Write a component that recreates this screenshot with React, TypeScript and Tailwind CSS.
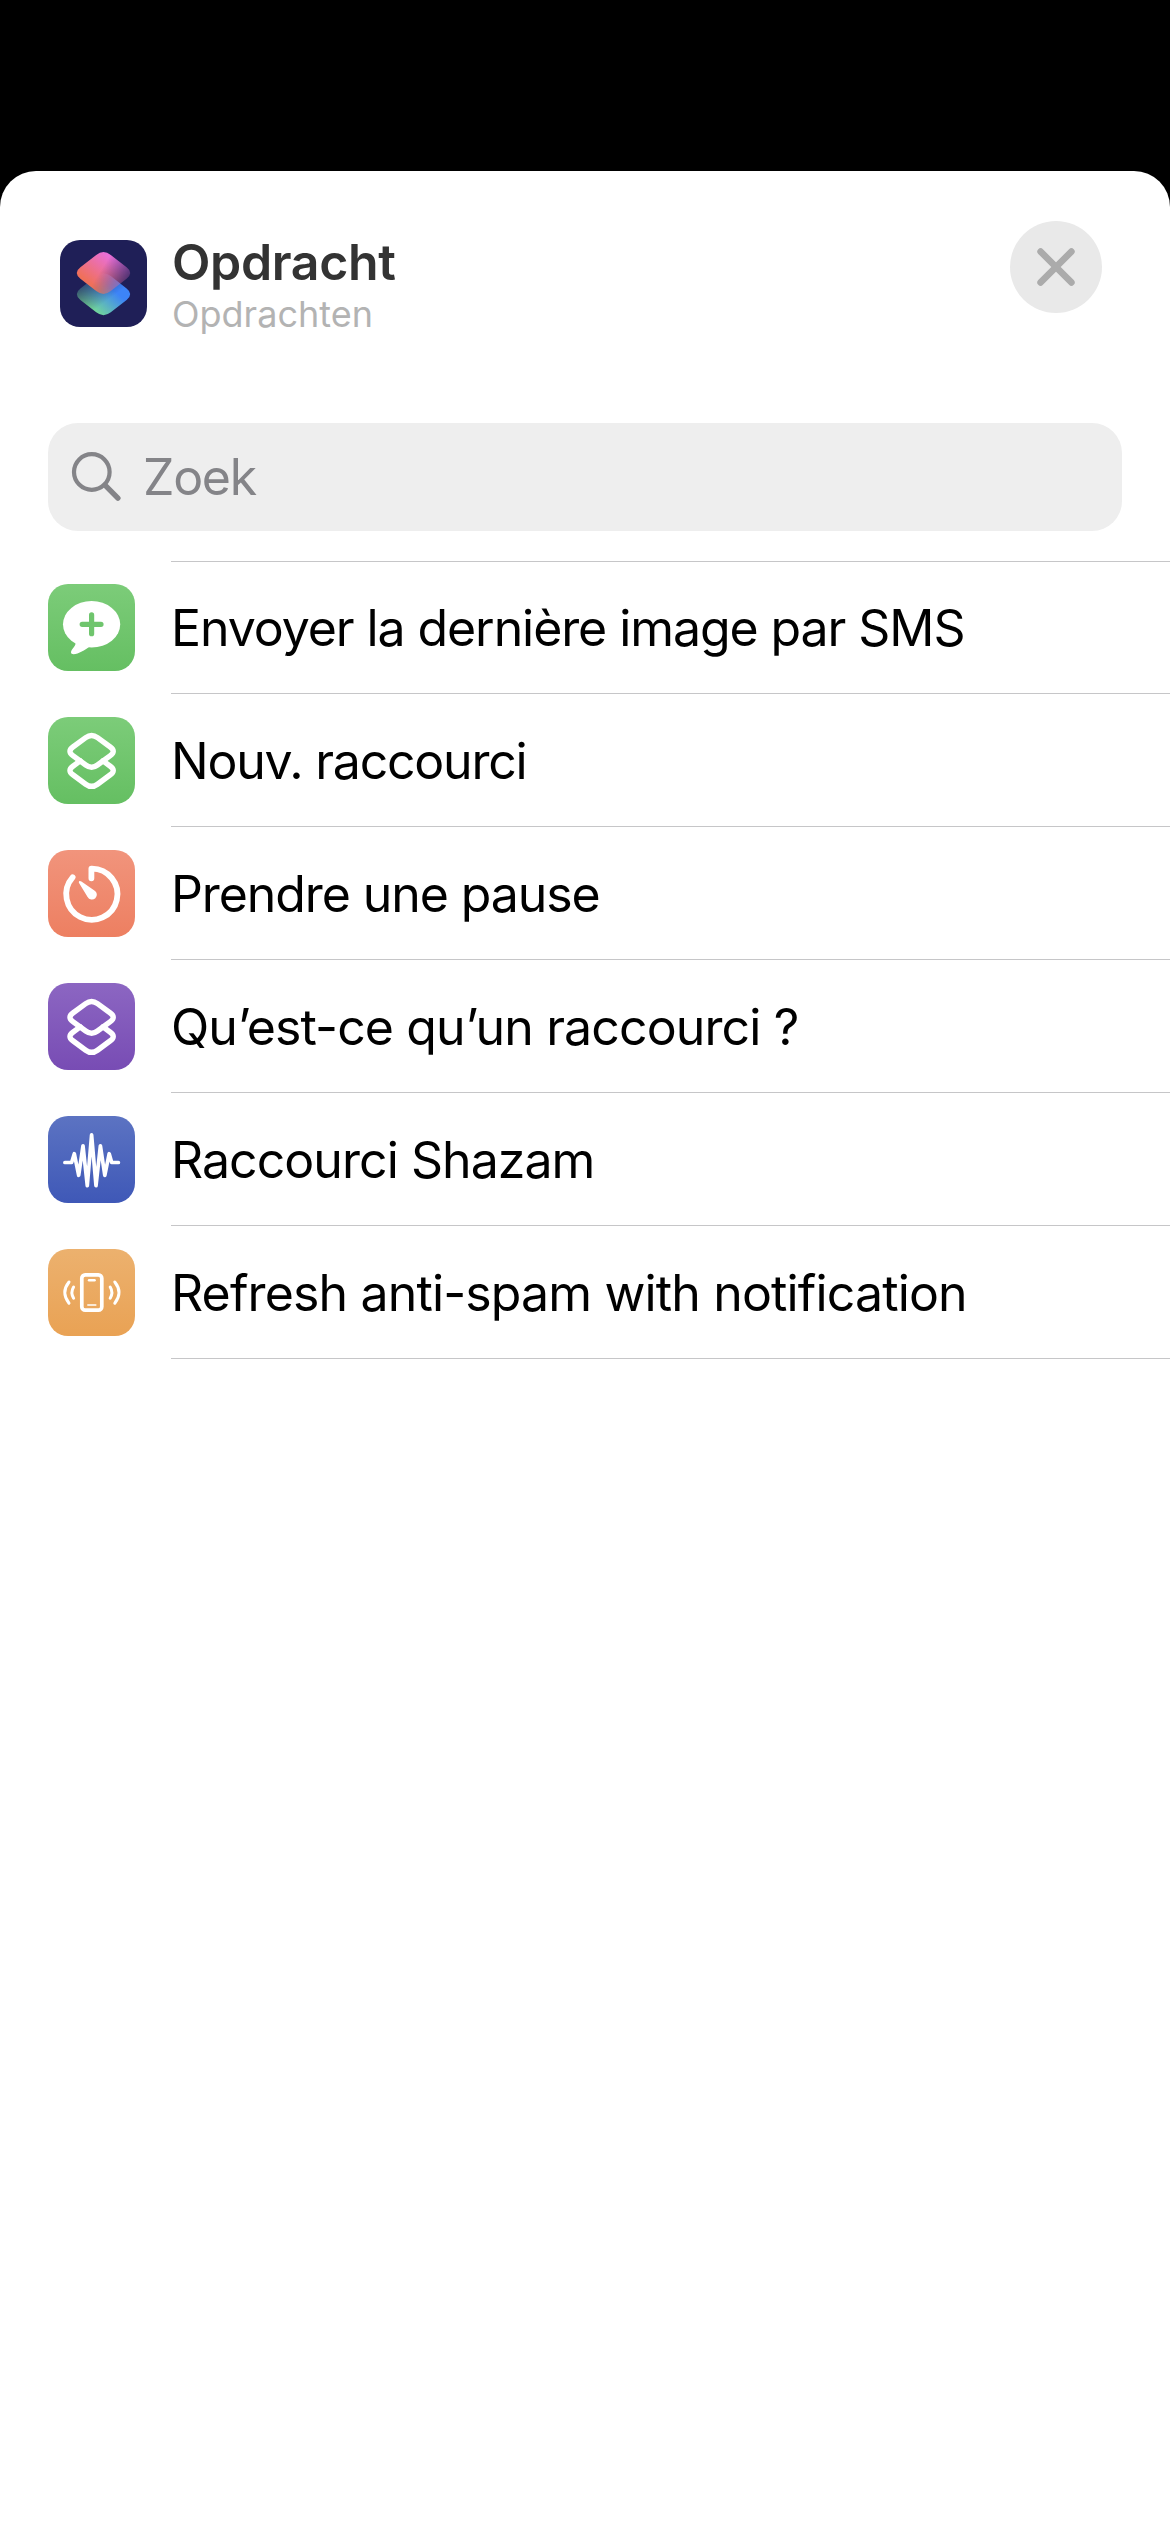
import type { ReactNode } from "react";

function diamond(cx: number, cy: number, a: number, b: number, f = 0.24) {
  const x = a * f;
  const y = b * f;
  return [
    `M${cx - x} ${cy - b + y}Q${cx} ${cy - b} ${cx + x} ${cy - b + y}`,
    `L${cx + a - x} ${cy - y}Q${cx + a} ${cy} ${cx + a - x} ${cy + y}`,
    `L${cx + x} ${cy + b - y}Q${cx} ${cy + b} ${cx - x} ${cy + b - y}`,
    `L${cx - a + x} ${cy + y}Q${cx - a} ${cy} ${cx - a + x} ${cy - y}Z`,
  ].join("");
}

function AppLogo() {
  return (
    <svg viewBox="0 0 87 87" className="size-[87px]">
      <defs>
        <linearGradient id="top" gradientUnits="userSpaceOnUse" x1="46" y1="14" x2="26" y2="40">
          <stop offset="0" stopColor="#e96fd6" />
          <stop offset="1" stopColor="#f0705a" />
        </linearGradient>
        <linearGradient id="topFade" gradientUnits="userSpaceOnUse" x1="43" y1="27" x2="67" y2="42">
          <stop offset="0" stopColor="#fff" />
          <stop offset="1" stopColor="#fff" stopOpacity="0.22" />
        </linearGradient>
        <linearGradient id="bottom" gradientUnits="userSpaceOnUse" x1="38" y1="74" x2="57" y2="53">
          <stop offset="0" stopColor="#72d69a" />
          <stop offset="1" stopColor="#3d84f7" />
        </linearGradient>
        <linearGradient id="bottomFade" gradientUnits="userSpaceOnUse" x1="24" y1="42" x2="41" y2="65">
          <stop offset="0" stopColor="#fff" stopOpacity="0.25" />
          <stop offset="1" stopColor="#fff" />
        </linearGradient>
        <mask id="topMask"><rect width="87" height="87" fill="url(#topFade)" /></mask>
        <mask id="bottomMask"><rect width="87" height="87" fill="url(#bottomFade)" /></mask>
      </defs>
      <rect width="87" height="87" rx="20" fill="#1f1f57" />
      <path d={diamond(43.5, 54.2, 30.4, 23.8)} fill="url(#bottom)" mask="url(#bottomMask)" />
      <path d={diamond(43.5, 33, 30.4, 23.8)} fill="url(#top)" mask="url(#topMask)" />
    </svg>
  );
}

const MessagePlus = (
  <>
    <ellipse cx="43.6" cy="40.3" rx="28.6" ry="23.2" fill="#fff" stroke="none" />
    <path d="M27.5 58C28.8 61.5 23.2 65 23 68.2C23 70.8 26.5 70.4 29.5 69.4C34 67.8 38 65.4 41 63Z" fill="#fff" stroke="none" />
    <path d="M43.6 30.9V49.7M34.2 40.3H53" stroke="#6fc56d" strokeWidth="5.2" />
  </>
);

const Layers = (
  <>
    <path d={diamond(43.6, 34.3, 24.6, 18)} strokeWidth="5.4" />
    <path
      d="M32.2 43.9L24.9 49.2Q19 53.5 24.9 57.8L37.7 67.2Q43.6 71.5 49.5 67.2L62.3 57.8Q68.2 53.5 62.3 49.2L55 43.9"
      strokeWidth="5.4"
    />
  </>
);

const Timer = (
  <>
    <path d="M24.6 27.3A25.6 25.6 0 1 0 43.4 18.6V28.3" strokeWidth="5.8" />
    <path
      d="M31.2 31.2C31.9 30.6 32.6 31 33.4 31.6L46.4 40.4A4.9 4.9 0 1 1 39.6 46.9L31.2 33.2C30.8 32.4 30.6 31.8 31.2 31.2Z"
      fill="#fff"
      stroke="none"
    />
  </>
);

const Wave = (
  <path
    d="M16.9 46.5H23.6L26.3 37.7L30.7 59.3L35 29.8L39.3 69.7L43.6 18.8L48 69.7L52.4 29.8L56.8 59.3L61.2 37.7L63.7 46.5H70.4"
    strokeWidth="3.7"
  />
);

const PhoneWaves = (
  <>
    <rect x="33.8" y="25.9" width="20" height="35.2" rx="3.4" strokeWidth="3.7" />
    <path d="M41 31.2H46.6" strokeWidth="2.4" />
    <path d="M39.8 56.1H47.8" strokeWidth="1.5" />
    <path d="M21 33Q12.6 43.5 21 54.2M25.6 38Q22.2 43.5 25.6 49.2M66.8 33Q75.2 43.5 66.8 54.2M62.2 38Q65.6 43.5 62.2 49.2" strokeWidth="3" />
  </>
);

type Item = { label: string; glyph: ReactNode; tile: string; tracking: string };

const items: Item[] = [
  { label: "Envoyer la dernière image par SMS", glyph: MessagePlus, tile: "from-[#7ccc79] to-[#65bf62]", tracking: "tracking-[-1.08px]" },
  { label: "Nouv. raccourci", glyph: Layers, tile: "from-[#7ccc79] to-[#65bf62]", tracking: "tracking-[-1.23px]" },
  { label: "Prendre une pause", glyph: Timer, tile: "from-[#f1947c] to-[#ed7f61]", tracking: "tracking-[-1.08px]" },
  { label: "Qu’est-ce qu’un raccourci ?", glyph: Layers, tile: "from-[#8c66c2] to-[#784cb4]", tracking: "tracking-[-0.88px]" },
  { label: "Raccourci Shazam", glyph: Wave, tile: "from-[#5c73c2] to-[#3f58b7]", tracking: "tracking-[-0.95px]" },
  { label: "Refresh anti-spam with notification", glyph: PhoneWaves, tile: "from-[#ecb16e] to-[#e9a254]", tracking: "tracking-[-0.85px]" },
];

export default function App() {
  return (
    <div className="flex h-[2532px] w-[1170px] flex-col bg-black pt-[171px] font-['Inter',sans-serif]">
      <main className="flex-1 rounded-t-[36px] bg-white">
        <header className="flex h-[252px] items-start pt-[50px] pr-[68px] pl-[60px]">
          <div className="pt-[19px]"><AppLogo /></div>
          <div className="flex flex-1 flex-col items-start pt-[16px] pl-[25px]">
            <h1 className="text-[50px] leading-[50px] font-semibold tracking-[-0.35px] text-[#333]">Opdracht</h1>
            <p className="mt-[5px] text-[36px] leading-[44px] text-[#b3b3b3]">Opdrachten</p>
          </div>
          <button className="flex size-[92px] items-center justify-center rounded-full bg-[#e9e9e9]">
            <svg viewBox="0 0 38 38" className="size-[38px]" stroke="#ababab" strokeWidth="6.6" strokeLinecap="round">
              <path d="M3.6 3.6L34.4 34.4M34.4 3.6L3.6 34.4" />
            </svg>
          </button>
        </header>
        <div className="mx-12 flex h-[108px] items-center rounded-[30px] bg-[#eee] pl-[23px] text-[#848488]">
          <svg viewBox="0 0 51 51" className="size-[51px]" fill="none" stroke="#848488" strokeLinecap="round">
            <circle cx="20.8" cy="20" r="17.8" strokeWidth="4.2" />
            <path d="M34 33.2L46.9 46.1" strokeWidth="5.4" />
          </svg>
          <span className="ml-[21px] text-[50px] leading-[60px] tracking-[-1.3px]">Zoek</span>
        </div>
        <ul className="mt-[30px]">
          <li className="ml-[171px] h-px bg-[#c6c6c8]" />
          {items.map((item, i) => (
            <li key={item.label} className={i === 0 ? "flex h-[132px] pl-12" : "flex h-[133px] pl-12"}>
              <div className={i === 0 ? "pt-[22px]" : "pt-[23px]"}>
                <div className={`size-[87px] rounded-[20px] bg-linear-to-b ${item.tile}`}>
                  <svg viewBox="0 0 87 87" className="size-[87px]" fill="none" stroke="#fff" strokeLinecap="round" strokeLinejoin="round">
                    {item.glyph}
                  </svg>
                </div>
              </div>
              <div className={`ml-9 flex flex-1 items-start border-b border-[#c6c6c8] ${i === 0 ? "pt-[36px]" : "pt-[37px]"}`}>
                <span className={`text-[50px] leading-[60px] whitespace-nowrap text-black ${item.tracking}`}>{item.label}</span>
              </div>
            </li>
          ))}
        </ul>
      </main>
    </div>
  );
}
